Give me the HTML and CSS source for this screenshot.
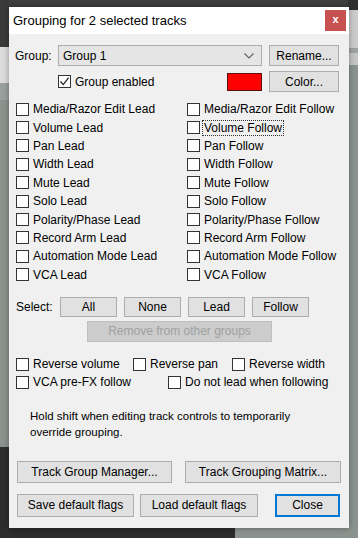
FILE: index.html
```html
<!DOCTYPE html>
<html lang="en">
<head>
    <meta charset="UTF-8">
    <meta name="viewport" content="width=device-width, initial-scale=1.0">
    <title>Grouping for 2 selected tracks</title>
    <link rel="stylesheet" href="styles.css">
</head>
<body>

<div class="dialog">
    <div class="titlebar">
        <span class="title">Grouping for 2 selected tracks</span>
        <span class="close-x">x</span>
    </div>

    <div class="content">
        <div class="row group-row">
            <span class="label">Group:</span>
            <div class="combo">
                <span>Group 1</span>
                <svg class="chevron" width="10" height="6" viewBox="0 0 10 6"><path d="M0.5 0.5 L5 5 L9.5 0.5" fill="none" stroke="#606060" stroke-width="1.1"/></svg>
            </div>
            <button class="btn side-btn">Rename...</button>
        </div>

        <div class="row enabled-row">
            <label class="check"><span class="box"><svg width="11" height="11" viewBox="0 0 11 11"><path d="M1.5 5.5 L4.3 8.6 L9.6 1.6" fill="none" stroke="#222" stroke-width="1.3"/></svg></span>Group enabled</label>
            <span class="swatch"></span>
            <button class="btn side-btn">Color...</button>
        </div>

        <div class="flags">
            <label class="check"><span class="box"></span>Media/Razor Edit Lead</label>
            <label class="check"><span class="box"></span>Media/Razor Edit Follow</label>
            <label class="check"><span class="box"></span>Volume Lead</label>
            <label class="check"><span class="box"></span><span class="focus">Volume Follow</span></label>
            <label class="check"><span class="box"></span>Pan Lead</label>
            <label class="check"><span class="box"></span>Pan Follow</label>
            <label class="check"><span class="box"></span>Width Lead</label>
            <label class="check"><span class="box"></span>Width Follow</label>
            <label class="check"><span class="box"></span>Mute Lead</label>
            <label class="check"><span class="box"></span>Mute Follow</label>
            <label class="check"><span class="box"></span>Solo Lead</label>
            <label class="check"><span class="box"></span>Solo Follow</label>
            <label class="check"><span class="box"></span>Polarity/Phase Lead</label>
            <label class="check"><span class="box"></span>Polarity/Phase Follow</label>
            <label class="check"><span class="box"></span>Record Arm Lead</label>
            <label class="check"><span class="box"></span>Record Arm Follow</label>
            <label class="check"><span class="box"></span>Automation Mode Lead</label>
            <label class="check"><span class="box"></span>Automation Mode Follow</label>
            <label class="check"><span class="box"></span>VCA Lead</label>
            <label class="check"><span class="box"></span>VCA Follow</label>
        </div>

        <div class="row select-row">
            <span class="label">Select:</span>
            <button class="btn sel-btn">All</button>
            <button class="btn sel-btn">None</button>
            <button class="btn sel-btn">Lead</button>
            <button class="btn sel-btn">Follow</button>
        </div>

        <button class="btn remove-btn" disabled>Remove from other groups</button>

        <div class="row opt-row first">
            <label class="check w117"><span class="box"></span>Reverse volume</label>
            <label class="check w99"><span class="box"></span>Reverse pan</label>
            <label class="check"><span class="box"></span>Reverse width</label>
        </div>
        <div class="row opt-row">
            <label class="check w152"><span class="box"></span>VCA pre-FX follow</label>
            <label class="check"><span class="box"></span>Do not lead when following</label>
        </div>

        <p class="hint">Hold shift when editing track controls to temporarily<br>override grouping.</p>

        <div class="row manager-row">
            <button class="btn big-btn">Track Group Manager...</button>
            <button class="btn big-btn matrix">Track Grouping Matrix...</button>
        </div>

        <div class="row bottom-row">
            <button class="btn save">Save default flags</button>
            <button class="btn load">Load default flags</button>
            <button class="btn close-btn">Close</button>
        </div>
    </div>
</div>

</body>
</html>
```

FILE: styles.css
```css
body {
    margin: 0;
    width: 358px;
    height: 538px;
    overflow: hidden;
    font-family: "Liberation Sans", Arial, sans-serif;
    font-size: 12px;
    color: #000;
    background:
        linear-gradient(to bottom, #2f2f2f 0 10px, #cbcbcb 10px 48px, #9ea3a0 48px 53px, #c2c5c3 53px 65px, #8b938f 65px) right top / 10px 100% no-repeat,
        linear-gradient(to bottom, #3a3a3a 0 47px, #dcdcdc 47px 83px, #9aa09d 83px 100px, #8b938f 100px 447px, #2e2e2e 447px) left top / 9px 100% no-repeat,
        linear-gradient(to right, #2c2c2c 0 235px, #8b938f 235px) left bottom / 100% 10px no-repeat,
        #3e3e3e;
}
.dialog {
    margin: 7px 0 0 9px;
    width: 340px;
    height: 521px;
    background: #f0f0f0;
    box-shadow: 0 0 6px rgba(0, 0, 0, 0.35);
}
.titlebar {
    height: 27px;
    background: #fff;
    display: flex;
    align-items: center;
    justify-content: space-between;
}
.title {
    padding-left: 4px;
    font-size: 13px;
}
.close-x {
    width: 21px;
    height: 21px;
    margin-right: 3px;
    background: #c75050;
    color: #fff;
    font-weight: bold;
    font-size: 11px;
    display: flex;
    align-items: center;
    justify-content: center;
    line-height: 1;
    padding-bottom: 2px;
    box-sizing: border-box;
}
.content {
    padding-left: 6px;
}
.row {
    display: flex;
    align-items: center;
}
.label {
    display: inline-block;
}
.btn {
    font: inherit;
    color: #000;
    background: #e1e1e1;
    border: 1px solid #adadad;
    padding: 0;
    margin: 0;
    box-sizing: border-box;
}
.group-row {
    margin-top: 11px;
    height: 21px;
}
.group-row .label {
    width: 43px;
}
.combo {
    width: 204px;
    height: 21px;
    box-sizing: border-box;
    border: 1px solid #adadad;
    background: #e5e5e5;
    display: flex;
    align-items: center;
    justify-content: space-between;
    padding: 0 7px 0 4px;
}
.side-btn {
    width: 70px;
    height: 21px;
    margin-left: 7px;
}
.enabled-row {
    margin-top: 5px;
    height: 21px;
    padding-left: 43px;
}
.enabled-row .check {
    width: 169px;
}
.swatch {
    width: 35px;
    height: 18px;
    box-sizing: border-box;
    background: #ff0000;
    border: 1px solid #5a1010;
}
.check {
    display: flex;
    align-items: center;
    gap: 4px;
    white-space: nowrap;
}
.box {
    width: 13px;
    height: 13px;
    box-sizing: border-box;
    border: 1px solid #333;
    background: #fff;
    display: flex;
    align-items: center;
    justify-content: center;
    flex: none;
}
.focus {
    outline: 1px dotted #333;
    outline-offset: 0;
    margin-left: -1px;
    padding: 0 1px;
}
.flags {
    margin-top: 8px;
    margin-left: 1px;
    display: grid;
    grid-template-columns: 171px 1fr;
    grid-auto-rows: 18.4px;
    align-items: center;
}
.select-row {
    margin-top: 13px;
    margin-left: 1px;
    height: 20px;
    gap: 7px;
}
.select-row .label {
    width: 37px;
}
.sel-btn {
    width: 57px;
    height: 20px;
}
.remove-btn {
    display: block;
    margin: 4px 0 0 72px;
    width: 185px;
    height: 21px;
    background: #cccccc;
    border-color: #bfbfbf;
    color: #a0a0a0;
}
.opt-row {
    height: 18px;
    margin-left: 1px;
}
.opt-row.first {
    margin-top: 13.5px;
}
.w117 { width: 117px; }
.w99 { width: 99px; }
.w152 { width: 152px; }
.hint {
    margin: 16.5px 0 0 15px;
    font-size: 11.5px;
    line-height: 16px;
}
.manager-row {
    margin-top: 21px;
    margin-left: 2px;
}
.big-btn {
    width: 155px;
    height: 22px;
}
.big-btn.matrix {
    width: 156px;
    margin-left: 13px;
}
.bottom-row {
    margin-top: 11px;
    margin-left: 2px;
}
.bottom-row .btn {
    height: 23px;
}
.save { width: 117px; }
.load {
    width: 118px;
    margin-left: 6px;
}
.close-btn {
    width: 65px;
    margin-left: 17px;
    border-color: #0078d7;
    box-shadow: inset 0 0 0 1px #0078d7;
}
```
